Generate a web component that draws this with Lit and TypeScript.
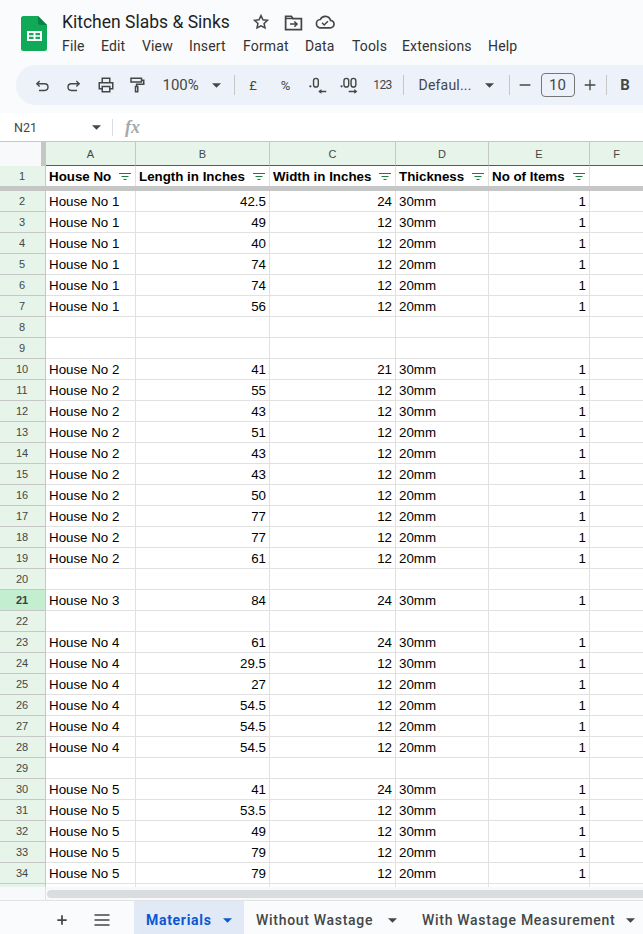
import { LitElement, html, css, svg } from "lit";
import { customElement } from "lit/decorators.js";

type Row = [string, string, string, string, string] | null;
const h = (n: number, l: string, w: string, t: string): Row => [`House No ${n}`, l, w, t, "1"];
const rows: Row[] = [
  h(1, "42.5", "24", "30mm"), h(1, "49", "12", "30mm"), h(1, "40", "12", "20mm"),
  h(1, "74", "12", "20mm"), h(1, "74", "12", "20mm"), h(1, "56", "12", "20mm"),
  null, null,
  h(2, "41", "21", "30mm"), h(2, "55", "12", "30mm"), h(2, "43", "12", "30mm"),
  h(2, "51", "12", "20mm"), h(2, "43", "12", "20mm"), h(2, "43", "12", "20mm"),
  h(2, "50", "12", "20mm"), h(2, "77", "12", "20mm"), h(2, "77", "12", "20mm"),
  h(2, "61", "12", "20mm"),
  null,
  h(3, "84", "24", "30mm"),
  null,
  h(4, "61", "24", "30mm"), h(4, "29.5", "12", "30mm"), h(4, "27", "12", "20mm"),
  h(4, "54.5", "12", "20mm"), h(4, "54.5", "12", "20mm"), h(4, "54.5", "12", "20mm"),
  null,
  h(5, "41", "24", "30mm"), h(5, "53.5", "12", "30mm"), h(5, "49", "12", "30mm"),
  h(5, "79", "12", "20mm"), h(5, "79", "12", "20mm"),
];
const heads = ["House No", "Length in Inches", "Width in Inches", "Thickness", "No of Items"];
const caret = html`<svg class="caret" width="9" height="5" viewBox="0 0 10 5"><path d="M0 0h10L5 5z" fill="currentColor"/></svg>`;
const filter = html`<svg class="filter" width="12" height="7" viewBox="0 0 12 7"><path d="M0 .5h12M2.500 3.500h7M4.500 6.500h3" stroke="#188038" stroke-width="1" fill="none"/></svg>`;
const ic = (p: unknown, size = 18, vb = "0 0 24 24", sw = 2) => html`<svg width=${size} height=${size} viewBox=${vb} fill="none" stroke="#444746" stroke-width=${sw}>${p}</svg>`;

@customElement("app-root")
export class AppRoot extends LitElement {
  static styles = css`
    :host { display: flex; flex-direction: column; width: 643px; height: 934px; overflow: hidden; background: #f9fbfd; font-family: Roboto, "Liberation Sans", sans-serif; color: #1f1f1f; }
    svg { display: block; flex: none; }
    .top { display: flex; height: 65px; flex: none; }
    .logo { margin: 16px 15px 0 21px; }
    .title-line { display: flex; align-items: center; height: 22px; margin-top: 11px; }
    .title { font-size: 17.5px; width: 183px; line-height: 22px; white-space: nowrap; }
    .title-icon { width: 32px; display: flex; justify-content: center; }
    .menu { display: flex; margin-top: 4px; font-size: 14px; line-height: 18px; letter-spacing: 0.15px; color: #333; }
    .menu span { flex: none; }
    .toolbar { flex: none; display: flex; align-items: center; height: 40px; margin: 0 0 0 16px; padding-left: 10.5px; background: #edf2fa; border-radius: 20px 0 0 20px; color: #444746; overflow: hidden; }
    .tool { flex: none; width: 31px; display: flex; justify-content: center; align-items: center; font-size: 13px; }
    .num123 { font-size: 12px; letter-spacing: -0.6px; }
    .zoom { flex: none; width: 47px; margin-left: 10px; font-size: 15px; color: #444746; }
    .tcaret { flex: none; width: 14px; display: flex; justify-content: center; color: #444746; }
    .sep { flex: none; width: 1px; height: 20px; background: #c7c7c7; }
    .font { flex: none; width: 53px; padding-left: 15px; font-size: 14px; letter-spacing: 0.2px; white-space: nowrap; }
    .size { flex: none; width: 34px; height: 24px; box-sizing: border-box; border: 1px solid #747775; border-radius: 4px; text-align: center; line-height: 22px; font-size: 15px; }
    .bold { font-weight: 700; font-size: 15px; margin-left: 3px; }
    .formula { flex: none; display: flex; align-items: center; height: 28px; margin-top: 8px; background: #fff; font-size: 12.5px; color: #444746; }
    .name { width: 90px; padding-left: 14px; box-sizing: border-box; flex: none; }
    .fcaret { flex: none; width: 12px; display: flex; justify-content: center; color: #444746; }
    .fsep { width: 1px; height: 17px; background: #dadce0; margin-left: 10px; }
    .fx { margin-left: 12px; font-family: "Liberation Serif", serif; font-style: italic; font-weight: 700; font-size: 18px; line-height: 20px; color: #a6a9ac; }
    .grid { flex: none; display: grid; height: 746px; overflow: hidden; background: #fff; font-family: "Liberation Sans", Arial, sans-serif; font-size: 13.33px; color: #000;
      grid-template-columns: 46px 90px 134px 126px 93px 101px 53px; grid-template-rows: 25px 20px 5px repeat(34, 21px); }
    .corner { background: #f8f9fa; border-top: 1px solid #c7c7c7; box-sizing: border-box; display: flex; justify-content: flex-end; }
    .corner i { display: block; width: 5px; background: #c4c7c5; }
    .ch { background: #e6f4ea; border-top: 1px solid #c7c7c7; border-right: 1px solid #c7c7c7; border-bottom: 1.5px solid #188038; box-sizing: border-box; display: flex; align-items: center; justify-content: center; font-size: 11px; color: #444746; }
    .ch.last { border-right: none; }
    .rh { background: #e6f4ea; border-right: 1px solid #c7c7c7; border-bottom: 1px solid #c7c7c7; box-sizing: border-box; display: flex; align-items: center; justify-content: center; font-size: 11px; color: #444746; padding-right: 1px; }
    .rh.top1 { border-bottom: none; }
    .rh.act { background: #c4eed0; font-weight: 700; color: #3c4043; }
    .c { border-right: 1px solid #e1e1e1; border-bottom: 1px solid #e1e1e1; box-sizing: border-box; padding: 0 3px; display: flex; align-items: center; white-space: nowrap; overflow: hidden; }
    .c.num { justify-content: flex-end; }
    .c.hd { font-weight: 700; justify-content: space-between; border-bottom: none; padding-right: 4px; }
    .c.end { border-right: none; }
    .freeze { grid-column: 1 / -1; background: #c4c7c5; }
    .scroll { flex: none; display: flex; height: 13px; background: #f8f9fa; border-bottom: 1px solid #e1e3e1; }
    .scroll .l { width: 46px; flex: none; box-sizing: border-box; border-right: 1px solid #e1e3e1; }
    .thumb { flex: 1; height: 8px; margin: 3px 0 0 1px; border-radius: 4px 0 0 4px; background: #dadce0; }
    .tabs { flex: 1; display: flex; align-items: stretch; font-size: 14px; font-weight: 500; color: #444746; letter-spacing: 0.7px; }
    .tb { flex: none; display: flex; justify-content: center; align-items: center; width: 40px; padding-top: 5px; box-sizing: border-box; }
    .tb.first { margin-left: 42px; }
    .tab { flex: none; box-sizing: border-box; display: flex; align-items: center; white-space: nowrap; padding: 5px 0 0 12px; }
    .tab .caret { margin-left: 11px; }
    .tab.on { width: 110px; background: #e1e9f7; color: #0b57d0; font-weight: 700; margin-left: 12px; }
    .tab.wo { width: 166px; }
    .tab.wo .caret { margin-left: 15px; }
  `;

  private row(n: number, r: Row) {
    return html`<div class="rh ${n === 21 ? "act" : ""}">${n}</div>
      <div class="c">${r ? r[0] : ""}</div>
      <div class="c num">${r ? r[1] : ""}</div>
      <div class="c num">${r ? r[2] : ""}</div>
      <div class="c">${r ? r[3] : ""}</div>
      <div class="c num">${r ? r[4] : ""}</div>
      <div class="c end"></div>`;
  }

  render() {
    const menu: [string, number][] = [["File", 39], ["Edit", 41], ["View", 47], ["Insert", 54], ["Format", 62], ["Data", 47], ["Tools", 50], ["Extensions", 86], ["Help", 40]];
    return html`
      <div class="top">
        <svg class="logo" width="26" height="35" viewBox="0 0 26 35">
          <path d="M2.500 0H17l9 9v23.500a2.500 2.500 0 0 1-2.500 2.500h-21A2.500 2.500 0 0 1 0 32.500v-30A2.500 2.500 0 0 1 2.500 0z" fill="#0fa958"/>
          <path d="M17 0l9 9h-6.500a2.500 2.500 0 0 1-2.500-2.500z" fill="#0b8043"/>
          <path d="M6 15h15v10H6zM8 17v2.200h4.500V17zM14.500 17v2.200H19V17zM8 20.800V23h4.500v-2.200zM14.500 20.800V23H19v-2.200z" fill="#fff" fill-rule="evenodd"/>
        </svg>
        <div>
          <div class="title-line">
            <div class="title">Kitchen Slabs &amp; Sinks</div>
            <div class="title-icon">${ic(svg`<path d="M12 3.500l2.600 5.600 6 .7-4.500 4.100 1.200 6L12 17l-5.300 2.900 1.200-6-4.500-4.100 6-.7z"/>`, 18)}</div>
            <div class="title-icon">${ic(svg`<path d="M3 5h6.500l2 2.500H21V20H3z"/><path d="M3 7.500h8.500" stroke-width="1.500"/><path d="M8 13.800h8M13 10.800l3 3-3 3" stroke-width="1.800"/>`, 21)}</div>
            <div class="title-icon">${ic(svg`<path d="M7 19a5 5 0 0 1-.6-10A6.500 6.500 0 0 1 18.600 10 4.500 4.500 0 0 1 18 19z"/><path d="M8.500 13l2.500 2.500 4.500-4.500" stroke-width="1.800"/>`, 20)}</div>
          </div>
          <div class="menu">${menu.map(([m, w]) => html`<span style="width:${w}px">${m}</span>`)}</div>
        </div>
      </div>
      <div class="toolbar">
        <div class="tool">${ic(svg`<path d="M8 5.500L4 9.500 8 13.500"/><path d="M4 9.500h11a4.500 4.500 0 0 1 0 9.500H7"/>`, 17)}</div>
        <div class="tool">${ic(svg`<path d="M16 5.500L20 9.500 16 13.500"/><path d="M20 9.500H9a4.500 4.500 0 0 0 0 9.500h8"/>`, 17)}</div>
        <div class="tool" style="margin-left:2px">${ic(svg`<path d="M7 8V3h10v5M7 17H3V9h18v8h-4"/><path d="M7 14h10v7H7z"/>`)}</div>
        <div class="tool">${ic(svg`<path d="M4 3h14v5H4zM18 5.500h3v5.500h-9.500v3"/><path d="M10 14h3v7h-3z"/>`)}</div>
        <div class="zoom">100%</div>
        <div class="tcaret">${caret}</div>
        <div class="sep" style="margin-left:10px"></div>
        <div class="tool" style="margin-left:3px">£</div>
        <div class="tool" style="margin-left:1.500px">%</div>
        <div class="tool" style="margin-left:1px">${ic(svg`<path d="M14 19.500H23" stroke-width="1.800"/><path d="M17 16.500v6l-4-3z" fill="#444746" stroke="none"/><circle cx="3" cy="13" r="1.400" fill="#444746" stroke="none"/><rect x="7" y="3" width="6" height="11" rx="3" stroke-width="1.800"/>`, 19)}</div>
        <div class="tool" style="margin-left:1px">${ic(svg`<circle cx="2" cy="13" r="1.400" fill="#444746" stroke="none"/><rect x="5" y="3" width="6" height="11" rx="3" stroke-width="1.800"/><rect x="14" y="3" width="6" height="11" rx="3" stroke-width="1.800"/><path d="M11 19.500H20" stroke-width="1.800"/><path d="M18 16.500v6l4-3z" fill="#444746" stroke="none"/>`, 19)}</div>
        <div class="tool num123" style="margin-left:2px">123</div>
        <div class="sep" style="margin-left:4.500px"></div>
        <div class="font">Defaul...</div>
        <div class="tcaret" style="width:36px">${caret}</div>
        <div class="sep" style="margin-left:1px"></div>
        <div class="tool">${ic(svg`<path d="M4 12h16"/>`, 16)}</div>
        <div class="size">10</div>
        <div class="tool">${ic(svg`<path d="M4 12h16M12 4v16"/>`, 16)}</div>
        <div class="sep"></div>
        <div class="tool bold">B</div>
      </div>
      <div class="formula">
        <div class="name">N21</div>
        <div class="fcaret">${caret}</div>
        <div class="fsep"></div>
        <div class="fx">fx</div>
      </div>
      <div class="grid">
        <div class="corner"><i></i></div>
        ${["A", "B", "C", "D", "E", "F"].map((c, i) => html`<div class="ch ${i === 5 ? "last" : ""}">${c}</div>`)}
        <div class="rh top1">1</div>
        ${heads.map((t) => html`<div class="c hd">${t}${filter}</div>`)}
        <div class="c hd end"></div>
        <div class="freeze"></div>
        ${rows.map((r, i) => this.row(i + 2, r))}
        <div class="rh"></div><div class="c"></div><div class="c"></div><div class="c"></div><div class="c"></div><div class="c"></div><div class="c end"></div>
      </div>
      <div class="scroll"><div class="l"></div><div class="thumb"></div></div>
      <div class="tabs">
        <div class="tb first">${ic(svg`<path d="M4 12h16M12 4v16"/>`, 14, "0 0 24 24", 3)}</div>
        <div class="tb">${ic(svg`<path d="M3 6h18M3 12h18M3 18h18"/>`, 20)}</div>
        <div class="tab on">Materials${caret}</div>
        <div class="tab wo">Without Wastage${caret}</div>
        <div class="tab">With Wastage Measurement${caret}</div>
      </div>
    `;
  }
}
